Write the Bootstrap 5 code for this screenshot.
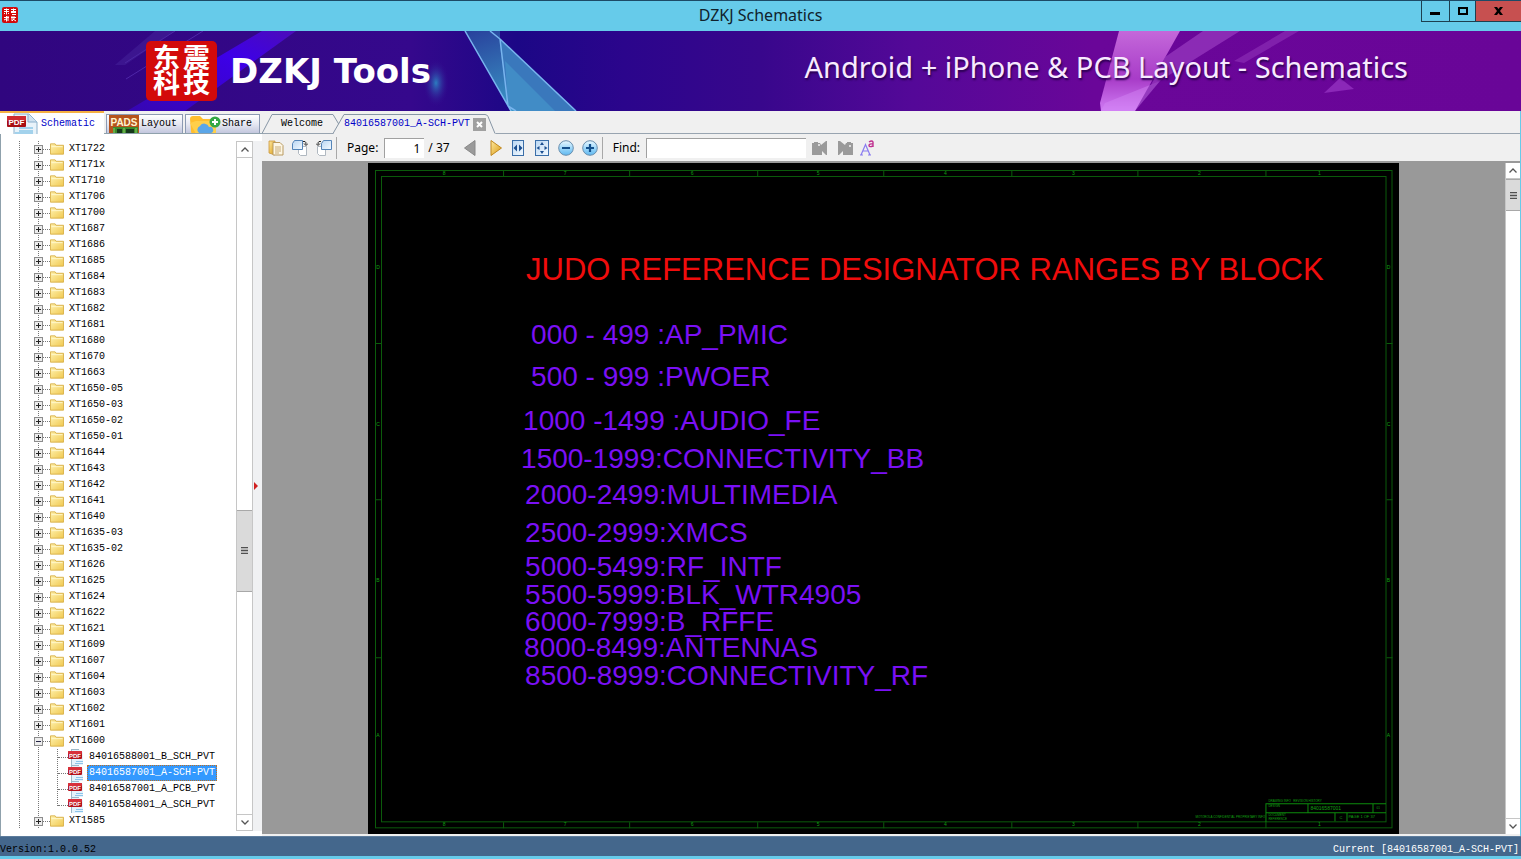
<!DOCTYPE html>
<html lang="en">
<head>
<meta charset="utf-8">
<meta name="viewport" content="width=device-width, initial-scale=1">
<title>DZKJ Schematics</title>
<link href="https://cdn.jsdelivr.net/npm/bootstrap@5.3.0/dist/css/bootstrap.min.css" rel="stylesheet">
<style>
  :root { --ui: "Noto Sans", "Open Sans", sans-serif; --mono: "Liberation Mono", monospace; }
  body { height: 100vh; font-family: var(--ui); font-size: 12px; line-height: 16px; color: #000; background: #66cbea; overflow: hidden; }
  button { padding: 0; border: 0; background: none; color: inherit; }
  svg { display: block; flex: none; }
  .mono { font-family: var(--mono); font-size: 10px; line-height: 16px; }

  .titlebar { height: 31px; border-top: 1px solid #1d4a66; background: #66cbea; }
  .titlebar h1 { font-size: 16px; line-height: 28px; font-weight: 400; color: #10222c; }
  .app-icon { left: 2px; top: 6px; }
  .win-btns { right: 0; top: 0; height: 21px; }
  .win-btns button { border: 1px solid #1d3f50; border-top: 0; border-right: 0; height: 21px; }
  .b-min { width: 28px; } .b-max { width: 26px; } .b-close { width: 46px; background: #c75050 !important; }

  .banner { height: 80px; background: #33078a; color: #fff; }
  .banner-art { inset: 0; width: 100%; height: 100%; }
  .brand { padding-left: 146px; gap: 13px; }
  .brand-name { font: 700 34px/40px "DejaVu Sans", sans-serif; }
  .tagline { font: 400 29px/40px "Noto Sans", sans-serif; padding: 0 113px 8px 0; color: #f8eaff; text-shadow: 1px 2px 2px #2a0050; }

  .frame { background: #f0f0f0; margin-right: 1px; }
  .side { width: 262px; background: #fff; border-left: 1px solid #8fa1ac; }
  .side-tabs { height: 23px; background: #f0f0f0; border-bottom: 1px solid #8fa1ac; gap: 2px; }
  .side-tabs button { height: 19px; align-self: flex-end; border: 1px solid #8c9ab2; border-bottom: 0; background: linear-gradient(#fff, #e6e8f2 50%, #c3c7de); overflow: hidden; padding-left: 2px; }
  .side-tabs button.on { height: 23px; width: 104px; margin: 0 0 -1px -1px; background: #fff; border: 0; border-top: 2px solid #f5b042; color: #0000c8; padding-left: 7px; gap: 3px; position: relative; }
  .t-layout { width: 77px; gap: 2px; } .t-share { width: 75px; gap: 1px; }
  .tree-wrap { padding: 7px 0 5px; }
  .tree { overflow: hidden; }
  .tree ul { list-style: none; margin: 0; padding: 0; }
  .node, .leaf { --dash: repeating-linear-gradient(#777 0 1px, transparent 1px 2px); height: 16px; }
  .node { padding-left: 33px; background: var(--dash) 18px 0/1px 100% no-repeat, var(--dash) 37px 0/1px 100% no-repeat; }
  .leaf { padding-left: 57px; background: var(--dash) 18px 0/1px 100% no-repeat, var(--dash) 37px 0/1px 100% no-repeat, var(--dash) 56px 0/1px 100% no-repeat; }
  .leaf.last { background-size: 1px 100%, 1px 100%, 1px 9px; }
  .node .dots { width: 7px; border-top: 1px dotted #777; }
  .leaf .dots { width: 10px; border-top: 1px dotted #777; }
  .node a, .leaf a { color: #000; text-decoration: none; }
  .node a { margin-left: 5px; }
  .leaf a { margin-left: 3px; padding: 0 1px; line-height: 14px; border: 1px dotted transparent; }
  .leaf a.sel { background: #3399ff; color: #fff; border-color: #c07020; }
  .sbar { width: 17px; border: 1px solid #c6c6c6; background: #fff; }
  .sbar button { height: 16px; display: flex; align-items: center; justify-content: center; background: #fff; }
  .sbar .up { border-bottom: 1px solid #c6c6c6; } .sbar .dn { border-top: 1px solid #c6c6c6; }
  .thumb { background: #dadada; border: 1px solid #a8a8a8; border-width: 1px 0; display: flex; align-items: center; justify-content: center; }
  .splitter { width: 9px; background: #f0f1f3; display: flex; align-items: center; }

  .doc-tabs { height: 23px; border-bottom: 1px solid #98a4b0; }
  .doc-tabs button { height: 21px; margin-top: 2px; position: relative; }
  .doc-tabs .edge { position: absolute; left: 0; top: 0; }
  .d-welcome { width: 78px; padding-left: 2px; }
  .d-active { width: 156px; color: #0000c8; text-align: left; padding-left: 4px; }
  .doc-tabs .shut { position: absolute; left: 133px; top: 5px; }
  .tools { height: 29px; border-bottom: 2px solid #999; padding-left: 6px; }
  .tools input { height: 20px; border: 0; border-top: 1px solid #a0a0a0; border-left: 1px solid #a0a0a0; background: #fff; font-size: 12px; border-radius: 0; padding: 0 4px; }
  .tools .bar-line { width: 1px; height: 22px; background: #a8a8a8; margin: 0 10px 0 4px; }
  .pg { width: 40px; text-align: right; }
  .fd { width: 160px; }
  .g6 { margin-left: 6px; } .g10 { margin-left: 10px; } .g14 { margin-left: 14px; }
  .desk { background: #999; }
  .sheet { height: 100%; max-width: 100%; background: #000; }
  .sheet text { font-family: "Liberation Sans", sans-serif; }
  .vbar { width: 15px; border-width: 0 0 0 1px; }
  .base-line { height: 2px; background: #f0f0f0; }
  .status { height: 20px; background: #44678c; margin-bottom: 3px; padding: 3px 2px 0 0; border-top: 1px solid #5d7c9c; line-height: 20px; }
</style>
</head>
<body class="d-flex flex-column">

<svg width="0" height="0" class="position-absolute" aria-hidden="true">
  <defs>
    <linearGradient id="fold" x1="0" y1="0" x2="1" y2="1"><stop offset="0" stop-color="#fff3b0"/><stop offset="1" stop-color="#f0c850"/></linearGradient>
    <linearGradient id="ball" x1="0" y1="0" x2="0" y2="1"><stop offset="0" stop-color="#eaf8ff"/><stop offset=".5" stop-color="#9fd8fa"/><stop offset="1" stop-color="#5fb8f0"/></linearGradient>
    <linearGradient id="gold" x1="0" y1="0" x2="1" y2="1"><stop offset="0" stop-color="#ffe9a0"/><stop offset="1" stop-color="#d99a10"/></linearGradient>
    <linearGradient id="blu" x1="0" y1="0" x2="1" y2="1"><stop offset="0" stop-color="#b9d6f2"/><stop offset="1" stop-color="#f4faff"/></linearGradient>
    <symbol id="i-plus" viewBox="0 0 9 9"><rect x=".5" y=".5" width="8" height="8" fill="#ececec" stroke="#8c8c8c"/><path d="M2 4.500h5M4.500 2v5" stroke="#222"/></symbol>
    <symbol id="i-minus" viewBox="0 0 9 9"><rect x=".5" y=".5" width="8" height="8" fill="#ececec" stroke="#8c8c8c"/><path d="M2 4.500h5" stroke="#224"/></symbol>
    <symbol id="i-folder" viewBox="0 0 15 12"><path d="M.5 11.500V.5h5l1 1.500h8v9.500z" fill="url(#fold)" stroke="#d8b24a"/><path d="M1.500 3.500h12" stroke="#fff8d0"/></symbol>
    <symbol id="i-pdf" viewBox="0 0 16 16"><path d="M3 .5h8l4 3V16H3z" fill="#e4f2fb"/><path d="M3.500 0v16M4 .5h7" stroke="#9db8c8"/><path d="M8 12.500h7M7 14.500h8" stroke="#8cc4ea"/><rect y="2" width="14" height="8" rx="1" fill="#b5121b"/><rect y="2" width="14" height="3" rx="1" fill="#d8303a"/><text x="7" y="8.500" text-anchor="middle" font-family="Liberation Sans" font-size="6" font-weight="700" fill="#fff">PDF</text></symbol>
    <symbol id="i-grip" viewBox="0 0 7 7"><path d="M0 .5h7M0 3.500h7M0 6.500h7" stroke="#505050" stroke-width="1.600"/></symbol>
    <symbol id="i-up" viewBox="0 0 8 5"><path d="M.5 4.500L4 1l3.500 3.500" fill="none" stroke="#555" stroke-width="1.300"/></symbol>
    <symbol id="i-down" viewBox="0 0 8 5"><path d="M.5 .5L4 4 7.500.5" fill="none" stroke="#555" stroke-width="1.300"/></symbol>
    <symbol id="i-seal" viewBox="0 0 71 60"><rect width="71" height="60" rx="5" fill="#d30a0a"/><g font-family="Noto Sans CJK SC, sans-serif" font-weight="700" font-size="27" fill="#fff"><text x="7" y="27">东</text><text x="37" y="27">震</text><text x="7" y="52">科</text><text x="37" y="52">技</text></g></symbol>
  </defs>
</svg>

<header class="titlebar position-relative text-center flex-shrink-0">
  <svg class="app-icon position-absolute" width="16" height="16" viewBox="0 0 16 16"><rect width="16" height="16" rx="2" fill="#d30a0a"/><path d="M2 2.500h5M2 4.500h5M4.500 1.500v6M2 7l1-1M6 6l1 1M9 2.500h5M9 4.500h5M11.500 1.500v4M9 5.500h5M10 7.500h4M2 10.500h5M4.500 9v5.500M2 13l2-1M6 9v5M10 9v5M9 10.500h5M12 9v3l-2 2M11 12l3 2" stroke="#fff" fill="none"/></svg>
  <h1 class="m-0">DZKJ Schematics</h1>
  <div class="win-btns position-absolute d-flex">
    <button class="b-min" aria-label="Minimize"><svg width="27" height="20"><path d="M8 11h10v3H8z"/></svg></button>
    <button class="b-max" aria-label="Maximize"><svg width="25" height="20"><path d="M8 6h10v8H8zM10 8v4h6V8z" fill-rule="evenodd"/></svg></button>
    <button class="b-close" aria-label="Close"><svg width="45" height="20"><path d="M18 6h3l1.500 2L24 6h3l-3 4 3 4h-3l-1.500-2L21 14h-3l3-4z"/></svg></button>
  </div>
</header>

<div class="banner position-relative d-flex align-items-center flex-shrink-0">
  <svg class="banner-art position-absolute" viewBox="0 0 1521 80" preserveAspectRatio="none" aria-hidden="true">
    <defs>
      <linearGradient id="bg"><stop offset="0" stop-color="#30067f"/><stop offset=".27" stop-color="#35088c"/><stop offset=".34" stop-color="#1c0786"/><stop offset=".41" stop-color="#2b058c"/><stop offset=".5" stop-color="#38078c"/><stop offset=".6" stop-color="#540898"/><stop offset=".72" stop-color="#6a0699"/><stop offset="1" stop-color="#690598"/></linearGradient>
      <linearGradient id="ray" x1="1" y1="0" x2="0" y2="1"><stop offset="0" stop-color="#4c0cb8"/><stop offset=".35" stop-color="#3d00e8"/><stop offset="1" stop-color="#3606b0"/></linearGradient>
      <linearGradient id="ice" x1="0" y1="0" x2=".5" y2="1"><stop offset="0" stop-color="#28409c"/><stop offset="1" stop-color="#3c9cc8"/></linearGradient>
      <linearGradient id="pink" x1="0" y1="0" x2="0" y2="1"><stop offset="0" stop-color="#c468da"/><stop offset=".6" stop-color="#a83cc8"/><stop offset="1" stop-color="#d07cf4"/></linearGradient>
      <radialGradient id="glow"><stop offset="0" stop-color="#2c7cc0"/><stop offset="1" stop-color="#35088c" stop-opacity="0"/></radialGradient>
    </defs>
    <rect width="1521" height="80" fill="url(#bg)"/>
    <path d="M262 0h34L185 80h-58z" fill="url(#ray)"/>
    <path d="M203 0l-77 48M175 0l-50 32" stroke="#5b35b8" opacity=".7"/><path d="M155 0h20l-50 34h-10z" fill="#46249c" opacity=".5"/>
    <ellipse cx="436" cy="52" rx="13" ry="24" fill="url(#glow)"/>
    <path d="M465 0h35v8l76 72h-65z" fill="url(#ice)"/>
    <path d="M500 8l76 72h-60l-8-5-8-60z" fill="#3a78bc"/><path d="M505 30l50 50h-39l-8-5z" fill="#48a0d0" opacity=".5"/>
    <path d="M465 0l46 80M500 8l76 72M500 8l8 67 8 5M490 0l10 8" stroke="#78b4ee" stroke-width="1.500" fill="none"/>
    <path d="M1119 0h61l-45 80h-34l-1-8z" fill="url(#pink)"/><path d="M1105 72l55-22-25 30h-34z" fill="#d88cf8" opacity=".4"/>
    <path d="M1203 0h37l-90 56 15-30z" fill="#9a3cc0" opacity=".7"/><path d="M1285 0h14l-55 32-10-2z" fill="#8a2cb4" opacity=".7"/>
    <path d="M1340 47l14 11-30 4z" fill="#8b28b8"/>
  </svg>
  <div class="brand position-relative d-flex align-items-center me-auto">
    <svg width="71" height="60" role="img" aria-label="东震科技"><use href="#i-seal"/></svg>
    <span class="brand-name">DZKJ Tools</span>
  </div>
  <div class="tagline position-relative">Android + iPhone &amp; PCB Layout - Schematics</div>
</div>

<div class="frame d-flex flex-grow-1" style="min-height:0">
  <aside class="side d-flex flex-column flex-shrink-0">
    <nav class="side-tabs d-flex mono flex-shrink-0">
      <button class="on d-flex align-items-center">
        <svg width="31" height="21" viewBox="0 0 31 21"><path d="M7 1h15l8 8v13H7z" fill="#e8f3fa" stroke="#8ab0cc"/><path d="M21 1v8h9" fill="#cfe2f0" stroke="#8ab0cc"/><path d="M12 15h14M12 18h14M8 20h18" stroke="#8cc8e8" stroke-width="1.500"/><rect y="3" width="19" height="11" rx="1" fill="#a80f14"/><rect y="3" width="19" height="5" rx="1" fill="#cf2a30"/><text x="9.500" y="11.500" text-anchor="middle" font-family="Liberation Sans" font-weight="700" font-size="8" fill="#fff">PDF</text></svg>Schematic</button>
      <button class="t-layout d-flex align-items-center"><svg width="30" height="19" viewBox="0 0 30 19"><rect width="30" height="19" fill="#b5521c"/><text x="15" y="11" text-anchor="middle" font-family="Liberation Sans" font-weight="700" font-size="10" fill="#fff4d0">PADS</text><rect x="4" y="12" width="25" height="7" fill="#3c8a2c"/><path d="M8 14h5v4H8zM17 14h8v5h-8z" fill="#16381a"/><path d="M5 13v6M15 13v6M27 13v6" stroke="#8ad060"/></svg>Layout</button>
      <button class="t-share d-flex align-items-center"><svg width="33" height="19" viewBox="0 0 33 19"><path d="M2 4q0-3 3-3h7l3 3h10q3 0 3 3v12H6q-3 0-3-3z" fill="#ffbe2e"/><path d="M2 8l6-2h20v13H8z" fill="#ffcf4a"/><path d="M11 18a4 4 0 0 1 1-7 5 5 0 0 1 9 1 3 3 0 0 1 2 6z" fill="#5ba6e8"/><circle cx="27" cy="7" r="5.500" fill="#34a844"/><path d="M24 7h6M27 4v6" stroke="#fff" stroke-width="2"/></svg>Share</button>
    </nav>
    <div class="tree-wrap d-flex flex-grow-1" style="min-height:0">
      <div class="tree mono flex-grow-1"><ul id="tree"></ul></div>
      <div class="sbar d-flex flex-column">
        <button class="up" aria-label="Scroll up"><svg width="8" height="5"><use href="#i-up"/></svg></button>
        <div style="flex:353"></div><div class="thumb" style="flex:80"><svg width="7" height="7"><use href="#i-grip"/></svg></div><div style="flex:223"></div>
        <button class="dn" aria-label="Scroll down"><svg width="8" height="5"><use href="#i-down"/></svg></button>
      </div>
      <div class="splitter"><svg width="6" height="8"><path d="M1 0l4 4-4 4z" fill="#d02020"/></svg></div>
    </div>
  </aside>

  <main class="d-flex flex-column flex-grow-1" style="min-width:0">
    <nav class="doc-tabs d-flex mono flex-shrink-0">
      <button class="d-welcome"><svg class="edge" width="80" height="21"><path d="M0 20.500L10 1.500h61l6 10" fill="none" stroke="#8796a5"/></svg><span class="position-relative">Welcome</span></button>
      <button class="d-active"><svg class="edge" width="156" height="22" overflow="visible"><path d="M-7 21.500L4 1.500h141l11 20z" fill="#f0f0f0"/><path d="M-7 20.500L4 1.500h141q2 0 3 2l7 17" fill="none" stroke="#8796a5"/></svg><span class="position-relative">84016587001_A-SCH-PVT</span><svg class="shut" width="13" height="13"><rect width="13" height="13" fill="#a0a0a0"/><path d="M4 4l5 5M9 4L4 9" stroke="#fff" stroke-width="2"/></svg></button>
    </nav>
    <div class="tools d-flex align-items-center flex-shrink-0">
      <button aria-label="Open"><svg width="16" height="16"><path d="M1 1h6v14l-6-2z" fill="url(#gold)" stroke="#c9963c" stroke-width=".8"/><path d="M5 2.500h7l3 3V15H5z" fill="#fdf6e4" stroke="#b99a60"/><path d="M7 7h6M7 9h6M7 11h6M7 13h4" stroke="#c8ac78"/></svg></button>
      <button class="ms-2" aria-label="Rotate right"><svg width="16" height="16"><path d="M6.500 6.500h8v9h-6l-2-2z" fill="#fff" stroke="#b0b8c0"/><path d="M.5 3.500l2-3h8v9h-10z" fill="url(#blu)" stroke="#5585b8"/><path d="M11 1.500h2q1 0 1 3M12 3.500l2 2 2-2" fill="none" stroke="#222"/></svg></button>
      <button class="ms-2" aria-label="Rotate left"><svg width="16" height="16"><path d="M1.500 6.500h8v9h-6l-2-2z" fill="#fff" stroke="#b0b8c0"/><path d="M5.500 3.500l2-3h8v9h-10z" fill="url(#blu)" stroke="#5585b8"/><path d="M5 1.500H3q-1 0-1 3M0 3.500l2 2 2-2" fill="none" stroke="#222"/></svg></button>
      <span class="bar-line"></span>
      <label for="pg">Page:</label><input id="pg" class="pg g6" value="1"><span class="ms-1">/ 37</span>
      <button class="g14" aria-label="Previous page"><svg width="12" height="16"><path d="M11 .5v15L.5 8z" fill="#9a9a9a" stroke="#888"/></svg></button>
      <button class="g14" aria-label="Next page"><svg width="12" height="16"><path d="M1 .5v15L11.500 8z" fill="url(#gold)" stroke="#c08820"/></svg></button>
      <button class="g10" aria-label="Fit width"><svg width="13" height="16"><rect x=".5" y=".5" width="11" height="15" fill="url(#blu)" stroke="#3a6ea8"/><path d="M5 4.500v7L1.500 8zM7 4.500v7L10.500 8z" fill="#1c4f90"/></svg></button>
      <button class="g10" aria-label="Fit page"><svg width="15" height="16"><rect x=".5" y=".5" width="13" height="15" fill="url(#blu)" stroke="#3a6ea8"/><path d="M7 2l2 3H5zM7 14l2-3H5zM1.500 8l3-2v4zM12.500 8l-3-2v4z" fill="#1c4f90"/></svg></button>
      <button class="ms-2" aria-label="Zoom out"><svg width="16" height="16"><circle cx="8" cy="8" r="7.300" fill="url(#ball)" stroke="#6a8fae"/><path d="M4 8h8" stroke="#14508c" stroke-width="2"/></svg></button>
      <button class="ms-2" aria-label="Zoom in"><svg width="16" height="16"><circle cx="8" cy="8" r="7.300" fill="url(#ball)" stroke="#6a8fae"/><path d="M4 8h8M8 4v8" stroke="#14508c" stroke-width="2.200"/></svg></button>
      <span class="bar-line"></span>
      <label for="fd">Find:</label><input id="fd" class="fd g6">
      <button class="g6" aria-label="Find previous"><svg width="16" height="16"><path d="M0 3h2V2h4v1h2l1 2 5-4h1v14h-1l-4-4v4H0z" fill="#9a9a9a"/><circle cx="7" cy="5" r="1" fill="#f0f0f0"/></svg></button>
      <button class="g10" aria-label="Find next"><svg width="16" height="16"><path d="M15 3h-2V2H9v1H8L7 5 2 1H0v14h1l4-4v4h10z" fill="#9a9a9a"/><circle cx="12" cy="6" r="1" fill="#f0f0f0"/></svg></button>
      <button class="g6" aria-label="Match case"><svg width="16" height="16"><path d="M1 15L5.500 4.500 10 15M0 15h3M8 15h3M3 11h5" fill="none" stroke="#8a7cf0" stroke-width="1.200"/><path d="M9 2q3-2 4 0v5M13 4q-4-.5-4 1.500T13 6" fill="none" stroke="#c03090" stroke-width="1.400"/></svg></button>
    </div>
    <div class="d-flex flex-grow-1" style="min-height:0">
      <div class="desk d-flex flex-grow-1 justify-content-center" style="min-width:0">
        <svg class="sheet" viewBox="0 0 1030 671">
          <g fill="none" stroke="#0b5b0b"><rect x="7.500" y="7.500" width="1016" height="657"/><rect x="13.500" y="13.500" width="1004" height="645"/>
            <path d="M135.500 7v6M261.500 7v6M389.500 7v6M515.500 7v6M643.500 7v6M769.500 7v6M897.500 7v6M135.500 659v6M261.500 659v6M389.500 659v6M515.500 659v6M643.500 659v6M769.500 659v6M897.500 659v6M7 180.500h6M7 336.500h6M7 494.500h6M1018 180.500h6M1018 336.500h6M1018 494.500h6"/>
            <path d="M897.500 659v-18.500h120M897.500 649.500h120M939.500 641v8M1004.500 641v8M966.500 649v9M978.500 649v9" stroke="#0d8a0d"/></g>
          <g id="marks" fill="#10a010" font-size="5" text-anchor="middle"></g>
          <g fill="#12a012" font-size="3"><text x="827" y="655">MOTOROLA CONFIDENTIAL PROPRIETARY INFO</text><text x="900" y="639">DRAWING INFO &#160; REVISION HISTORY</text><text x="942" y="647" font-size="5">84016587001</text><text x="900" y="644">DESIGN</text><text x="900" y="653">DOCUMENT</text><text x="900" y="657">REFERENCE</text><text x="971" y="656" font-size="4">C</text><text x="1008" y="646">01</text><text x="980" y="655" font-size="4">PAGE 1 OF 37</text></g>
          <text x="158" y="117" font-size="31" fill="#f00c0c">JUDO REFERENCE DESIGNATOR RANGES BY BLOCK</text>
          <g font-size="28" fill="#7a10f5">
            <text x="163" y="181">000 - 499 :AP_PMIC</text>
            <text x="163" y="223">500 - 999 :PWOER</text>
            <text x="155" y="267">1000 -1499 :AUDIO_FE</text>
            <text x="153" y="305">1500-1999:CONNECTIVITY_BB</text>
            <text x="157" y="341">2000-2499:MULTIMEDIA</text>
            <text x="157" y="379">2500-2999:XMCS</text>
            <text x="157" y="413">5000-5499:RF_INTF</text>
            <text x="157" y="441">5500-5999:BLK_WTR4905</text>
            <text x="157" y="468">6000-7999:B_RFFE</text>
            <text x="156" y="494">8000-8499:ANTENNAS</text>
            <text x="157" y="522">8500-8999:CONNECTIVITY_RF</text>
          </g>
        </svg>
      </div>
      <div class="sbar vbar d-flex flex-column">
        <button class="up" aria-label="Scroll up"><svg width="8" height="5"><use href="#i-up"/></svg></button>
        <div class="thumb" style="height:32px"><svg width="7" height="7"><use href="#i-grip"/></svg></div><div class="flex-grow-1"></div>
        <button class="dn" aria-label="Scroll down"><svg width="8" height="5"><use href="#i-down"/></svg></button>
      </div>
    </div>
    <div class="base-line"></div>
  </main>
</div>

<footer class="status mono d-flex justify-content-between flex-shrink-0"><span>Version:1.0.0.52</span><span class="text-white">Current [84016587001_A-SCH-PVT]</span></footer>

<script src="https://cdn.jsdelivr.net/npm/bootstrap@5.3.0/dist/js/bootstrap.bundle.min.js"></script>
<script>
  const models = "1722 171x 1710 1706 1700 1687 1686 1685 1684 1683 1682 1681 1680 1670 1663 1650-05 1650-03 1650-02 1650-01 1644 1643 1642 1641 1640 1635-03 1635-02 1626 1625 1624 1622 1621 1609 1607 1604 1603 1602 1601 1600 1585".split(" ");
  const files = ["84016588001_B_SCH_PVT", "84016587001_A-SCH-PVT", "84016587001_A_PCB_PVT", "84016584001_A_SCH_PVT"];
  const icon = (id, w, h) => `<svg width="${w}" height="${h}"><use href="#${id}"/></svg>`;
  document.getElementById("tree").innerHTML = models.map(m => {
    const open = m === "1600";
    let row = `<li class="node d-flex align-items-center">${icon(open ? "i-minus" : "i-plus", 9, 9)}<span class="dots"></span>${icon("i-folder", 14, 12)}<a href="#">XT${m}</a></li>`;
    if (open) row += files.map((f, i) => `<li class="leaf d-flex align-items-center${i === 3 ? " last" : ""}"><span class="dots"></span>${icon("i-pdf", 16, 16)}<a href="#"${i === 1 ? ' class="sel"' : ""}>${f}</a></li>`).join("");
    return row;
  }).join("");
  // zone letters and numbers round the drawing border
  const xs = [76, 197, 324, 450, 577, 705, 831, 951], ys = [104, 261, 417, 572];
  document.getElementById("marks").innerHTML =
    xs.map((x, i) => `<text x="${x}" y="12">${8 - i}</text><text x="${x}" y="663">${8 - i}</text>`).join("") +
    ys.map((y, i) => `<text x="10" y="${y + 2}">${"DCBA"[i]}</text><text x="1020" y="${y + 2}">${"DCBA"[i]}</text>`).join("");
</script>
</body>
</html>
